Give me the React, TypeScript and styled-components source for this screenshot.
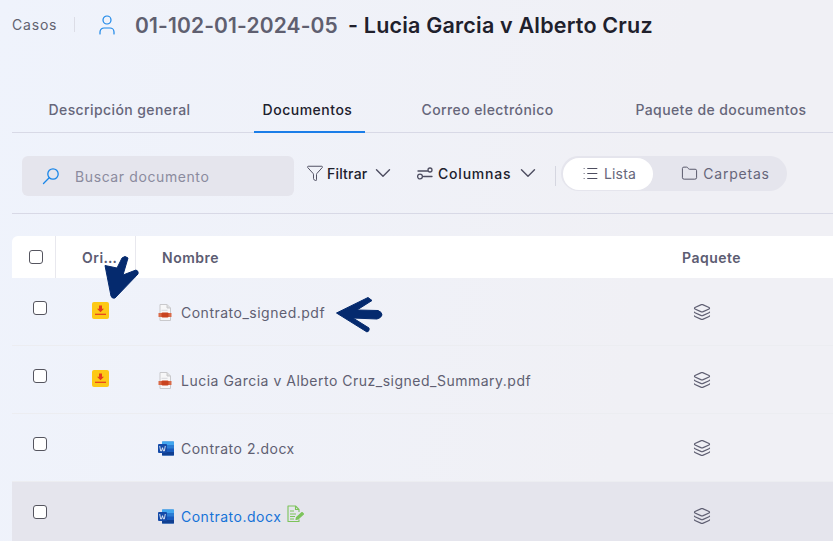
import React from "react";
import styled, { createGlobalStyle } from "styled-components";
import { ChevronDown, Folder, Funnel, Layers, List, User } from "lucide-react";

const Global = createGlobalStyle`
  html, body { margin: 0; padding: 0; }
  body { font-family: Inter, "Liberation Sans", sans-serif; background: #f0f1f7; }
`;

const Page = styled.div`
  position: relative;
  width: 833px;
  height: 541px;
  overflow: hidden;
  padding-left: 12px;
  box-sizing: border-box;
  background: linear-gradient(100deg, #eff3fc 0%, #f0f0f5 75%);
`;

const Header = styled.header`
  display: flex;
  align-items: center;
  height: 50px;
`;
const Crumb = styled.span`
  font-size: 14px;
  letter-spacing: 0.8px;
  color: #62626f;
  width: 62px;
  border-right: 1px solid #dcdde6;
  line-height: 15px;
  margin-bottom: 2px;
`;
const UserMark = styled(User)`
  margin: 0 16px 0 20px;
  color: #1a86e8;
`;
const CaseNo = styled.h1`
  margin: 0;
  font-size: 21px;
  font-weight: 600;
  letter-spacing: 0.14px;
  color: #5f5f70;
`;
const CaseName = styled.span`
  margin-left: 10px;
  font-size: 21.5px;
  font-weight: 600;
  letter-spacing: 0.2px;
  color: #20202c;
`;

const Tabs = styled.nav`
  display: flex;
  margin-top: 38px;
  height: 44px;
  padding-left: 29px;
  border-bottom: 1px solid #d8d9e6;
`;
const Tab = styled.div<{ $active?: boolean; $w: number; $ml: number }>`
  display: flex;
  align-items: center;
  justify-content: center;
  box-sizing: border-box;
  width: ${(p) => p.$w}px;
  margin-left: ${(p) => p.$ml}px;
  height: 45px;
  padding-right: ${(p) => (p.$active ? 4 : 0)}px;
  font-size: 14px;
  font-weight: 500;
  letter-spacing: ${(p) => (p.$active ? 0.5 : 0.4)}px;
  white-space: nowrap;
  color: ${(p) => (p.$active ? "#20202c" : "#66667a")};
  border-bottom: 2px solid ${(p) => (p.$active ? "#1a7de8" : "transparent")};
`;

const Toolbar = styled.div`
  display: flex;
  align-items: flex-start;
  height: 81px;
  padding: 23px 0 0 10px;
  box-sizing: border-box;
  border-bottom: 1px solid #d8d9e6;
`;
const Search = styled.div`
  display: flex;
  align-items: center;
  gap: 15px;
  width: 272px;
  height: 40px;
  padding-left: 20px;
  box-sizing: border-box;
  border-radius: 6px;
  background: #e5e5ed;
  font-size: 14px;
  letter-spacing: 0.6px;
  color: #8b8b9e;
`;
const ToolButton = styled.div<{ $ml: number; $w: number; $track: number }>`
  display: flex;
  align-items: center;
  height: 34px;
  width: ${(p) => p.$w}px;
  margin-left: ${(p) => p.$ml}px;
  font-size: 14px;
  font-weight: 500;
  letter-spacing: ${(p) => p.$track}px;
  color: #20202c;
  svg { flex: none; }
`;
const Caret = styled(ChevronDown)`
  margin-left: auto;
  color: #4d4d60;
`;
const ToolIcon = styled.span<{ $gap: number }>`
  display: flex;
  margin-right: ${(p) => p.$gap}px;
  color: #4d4d60;
`;
const VSep = styled.span`
  width: 1px;
  height: 20px;
  margin: 10px 5px 0 14px;
  background: #d5d6e0;
`;
const Segments = styled.div`
  display: flex;
  align-items: center;
  width: 226px;
  height: 35px;
  padding: 0 2px;
  box-sizing: border-box;
  border-radius: 18px;
  background: #e5e5ed;
`;
const Segment = styled.div<{ $active?: boolean; $w: number; $track: number; $left: number }>`
  display: flex;
  align-items: center;
  justify-content: center;
  gap: 5px;
  width: ${(p) => p.$w}px;
  height: 32px;
  box-sizing: border-box;
  padding-left: ${(p) => p.$left}px;
  border-radius: 16px;
  background: ${(p) => (p.$active ? "#ffffff" : "transparent")};
  font-size: 14px;
  letter-spacing: ${(p) => p.$track}px;
  color: #66667a;
  svg { color: #4d4d60; }
`;

const Table = styled.div`
  margin-top: 22px;
`;
const HeadRow = styled.div`
  display: grid;
  grid-template-columns: 44px 80px 519px 1fr;
  height: 42px;
  align-items: center;
  background: #fff;
  border-radius: 6px 0 0 0;
`;
const HeadCell = styled.div<{ $line?: boolean; $pad?: number }>`
  display: flex;
  align-items: center;
  height: 100%;
  box-sizing: border-box;
  padding-left: ${(p) => p.$pad ?? 0}px;
  font-size: 14px;
  font-weight: 600;
  letter-spacing: 0.5px;
  color: #5c5c72;
  border-right: ${(p) => (p.$line ? "1px solid #e8e8ee" : "0")};
`;
const Row = styled.div<{ $selected?: boolean }>`
  display: grid;
  grid-template-columns: 44px 80px 519px 1fr;
  height: 68px;
  align-items: center;
  box-sizing: border-box;
  border-bottom: 1px solid #ecedf1;
  background: ${(p) => (p.$selected ? "#e5e5ed" : "transparent")};
`;
const Check = styled.span<{ $row?: boolean }>`
  display: block;
  box-sizing: border-box;
  width: 14px;
  height: 14px;
  border: 1px solid #55555f;
  border-radius: 3px;
  background: #fff;
  margin-left: ${(p) => (p.$row ? 21 : 17)}px;
  margin-bottom: ${(p) => (p.$row ? 7 : 0)}px;
`;
const OriginCell = styled.div`
  display: flex;
  padding: 0 0 3px 36px;
`;
const NameCell = styled.div<{ $selected?: boolean }>`
  display: flex;
  align-items: center;
  padding: 2px 0 0 22px;
  font-size: 14px;
  letter-spacing: 0.5px;
  color: ${(p) => (p.$selected ? "#1673d8" : "#5f5f72")};
`;
const FileGlyph = styled.span`
  display: flex;
  width: 23px;
  flex: none;
`;
const SignedMark = styled.span`
  display: flex;
  margin: 0 0 5px 6px;
`;
const PackageCell = styled.div`
  display: flex;
  padding: 1px 0 0 38px;
  color: #5f5f72;
`;
const Pointers = styled.svg`
  position: absolute;
  left: 0;
  top: 0;
  pointer-events: none;
`;

const SearchGlyph = () => (
  <svg width="18" height="18" viewBox="0 0 18 18" fill="none" stroke="#1a86e8" strokeWidth="1.3" strokeLinecap="round">
    <circle cx="11" cy="7" r="5.2" />
    <path d="M7.2 10.8 1.5 16.5" />
  </svg>
);
const ColumnsGlyph = () => (
  <svg width="16" height="16" viewBox="0 0 16 16" fill="none" stroke="#4d4d60" strokeWidth="1.3" strokeLinecap="round">
    <path d="M1 6h9.5M6.5 11.5H15" />
    <circle cx="13" cy="5" r="2" />
    <circle cx="3" cy="11.5" r="2.4" />
  </svg>
);
const DownloadGlyph = () => (
  <svg width="17" height="17" viewBox="0 0 17 17">
    <rect width="17" height="17" rx="2" fill="#fdc915" />
    <path d="M7 3.5h3v3.2h2L8.5 10.3 5 6.7h2z" fill="#e53c1d" />
    <rect x="3" y="11.7" width="11" height="1.2" fill="#e53c1d" />
  </svg>
);
const PdfGlyph = () => (
  <svg width="14" height="17" viewBox="0 0 14 17">
    <path d="M2 .5h7l3.5 3.5v12.5H2z" fill="#f7f7f8" stroke="#c9c9cc" />
    <path d="M9 .5V4h3.5" fill="#ddd" stroke="#c9c9cc" />
    <rect x="0.5" y="9" width="13" height="4" fill="#d96a48" />
    <rect x="3.5" y="8.5" width="7" height="5" rx="1" fill="#c9431f" />
    <rect x="3.5" y="5.8" width="6" height="1" fill="#d8d8dc" />
  </svg>
);
const WordGlyph = () => (
  <svg width="16" height="15" viewBox="0 0 16 15">
    <rect x="4" y="0.5" width="12" height="14" rx="1" fill="#2b7cd3" />
    <rect x="4" y="0.5" width="12" height="3.5" fill="#41a5ee" />
    <rect x="4" y="7.5" width="12" height="3.5" fill="#185abd" />
    <rect x="4" y="11" width="12" height="3.5" fill="#103f91" />
    <rect x="0" y="3" width="9" height="9" rx="1" fill="#144aa8" />
    <path d="M1.7 5l1 5h.8l1-3.3 1 3.3h.8l1-5" fill="none" stroke="#fff" strokeWidth=".8" />
  </svg>
);
const SignedGlyph = () => (
  <svg width="18" height="18" viewBox="0 0 18 18" fill="none" stroke="#7cc35a" strokeWidth="1.1" strokeLinejoin="round">
    <path d="M12 7V4.5L8.5 1H1v15.5h11v-2" />
    <path d="M8.5 1v3.5H12" />
    <path d="M3 6h4M3 9h6M3 11.5h5M3 14h4" />
    <path d="M9.5 12.5 15 7.5l1.5 1.5-5.5 5-2 .5z" fill="#7cc35a" />
  </svg>
);

type Doc = { name: string; kind: "pdf" | "word"; origin?: boolean; selected?: boolean };
const docs: Doc[] = [
  { name: "Contrato_signed.pdf", kind: "pdf", origin: true },
  { name: "Lucia Garcia v Alberto Cruz_signed_Summary.pdf", kind: "pdf", origin: true },
  { name: "Contrato 2.docx", kind: "word" },
  { name: "Contrato.docx", kind: "word", selected: true },
];

export default function App() {
  return (
    <Page>
      <Global />
      <Header>
        <Crumb>Casos</Crumb>
        <UserMark size={24} strokeWidth={1.2} />
        <CaseNo>01-102-01-2024-05</CaseNo>
        <CaseName>- Lucia Garcia v Alberto Cruz</CaseName>
      </Header>
      <Tabs>
        <Tab $w={157} $ml={0}>Descripción general</Tab>
        <Tab $w={111} $ml={56} $active>Documentos</Tab>
        <Tab $w={147} $ml={49}>Correo electrónico</Tab>
        <Tab $w={190} $ml={65}>Paquete de documentos</Tab>
      </Tabs>
      <Toolbar>
        <Search><SearchGlyph />Buscar documento</Search>
        <ToolButton $ml={12} $w={90} $track={0.2}>
          <ToolIcon $gap={3}><Funnel size={18} strokeWidth={1.3} /></ToolIcon>
          Filtrar
          <Caret size={26} strokeWidth={1.3} />
        </ToolButton>
        <ToolButton $ml={21} $w={124} $track={0.8}>
          <ToolIcon $gap={5}><ColumnsGlyph /></ToolIcon>
          Columnas
          <Caret size={26} strokeWidth={1.3} />
        </ToolButton>
        <VSep />
        <Segments>
          <Segment $active $w={90} $track={0.2} $left={2}><List size={17} strokeWidth={1.6} />Lista</Segment>
          <Segment $w={132} $track={0.8} $left={13}><Folder size={17} strokeWidth={1.3} />Carpetas</Segment>
        </Segments>
      </Toolbar>
      <Table>
        <HeadRow>
          <HeadCell $line><Check /></HeadCell>
          <HeadCell $line $pad={26}>Ori…</HeadCell>
          <HeadCell $pad={26}>Nombre</HeadCell>
          <HeadCell $pad={27}>Paquete</HeadCell>
        </HeadRow>
        {docs.map((d) => (
          <Row key={d.name} $selected={d.selected}>
            <Check $row />
            <OriginCell>{d.origin && <DownloadGlyph />}</OriginCell>
            <NameCell $selected={d.selected}>
              <FileGlyph>{d.kind === "pdf" ? <PdfGlyph /> : <WordGlyph />}</FileGlyph>
              {d.name}
              {d.selected && <SignedMark><SignedGlyph /></SignedMark>}
            </NameCell>
            <PackageCell><Layers size={18} strokeWidth={1.6} /></PackageCell>
          </Row>
        ))}
      </Table>
      <Pointers width="833" height="541" viewBox="0 0 833 541">
        <g fill="#052a6e" stroke="#052a6e" strokeWidth="1" strokeLinejoin="round">
          <path d="M105 265.5L117 268L122 258Q125 255 128 258L123 275L136 270Q139 271 138 274L115 298Q112 299 111 296Z" />
          <path d="M336.5 313L368 297.5L372 300.5L357 310L378 310.5Q382 312 382 315Q381 318 377 319L353 318L369 328Q370 331 367 332Z" />
        </g>
      </Pointers>
    </Page>
  );
}
